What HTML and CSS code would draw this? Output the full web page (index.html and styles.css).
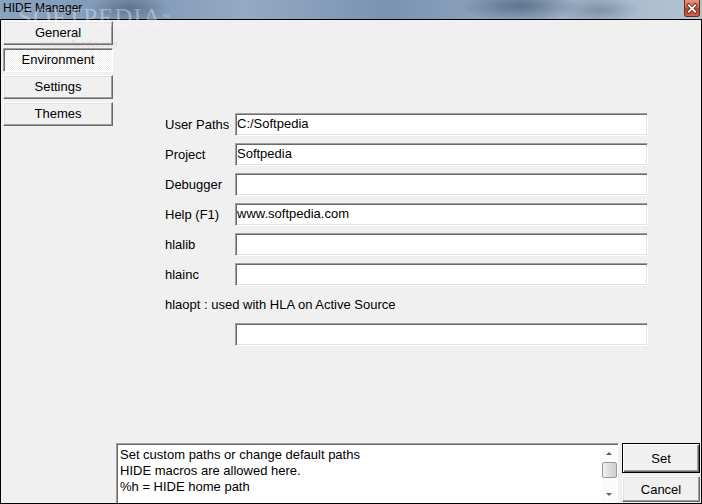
FILE: index.html
```html
<!DOCTYPE html>
<html lang="en">

<head>
    <meta charset="UTF-8">
    <title>HIDE Manager</title>
    <link rel="stylesheet" href="styles.css">
</head>

<body>
    <div class="window">
        <div class="titlebar">
            <span class="title">HIDE Manager</span>
            <button class="close-btn">
                <svg width="15" height="15" viewBox="0 0 15 15">
                    <path d="M4 4 L11 11 M11 4 L4 11" stroke="#5a1a10" stroke-width="3.6" stroke-linecap="square" />
                    <path d="M4 4 L11 11 M11 4 L4 11" stroke="#fff" stroke-width="2" stroke-linecap="square" />
                </svg>
            </button>
        </div>

        <div class="client">
            <div class="sidebar">
                <button class="tab-btn">General</button>
                <button class="tab-btn active">Environment</button>
                <button class="tab-btn">Settings</button>
                <button class="tab-btn">Themes</button>
            </div>

            <div class="form">
                <div class="row">
                    <label>User Paths</label>
                    <div class="field">C:/Softpedia</div>
                </div>
                <div class="row">
                    <label>Project</label>
                    <div class="field">Softpedia</div>
                </div>
                <div class="row">
                    <label>Debugger</label>
                    <div class="field"></div>
                </div>
                <div class="row">
                    <label>Help (F1)</label>
                    <div class="field">www.softpedia.com</div>
                </div>
                <div class="row">
                    <label>hlalib</label>
                    <div class="field"></div>
                </div>
                <div class="row">
                    <label>hlainc</label>
                    <div class="field"></div>
                </div>
                <div class="row">
                    <label class="wide">hlaopt : used with HLA on Active Source</label>
                </div>
                <div class="row">
                    <label></label>
                    <div class="field"></div>
                </div>
            </div>

            <div class="bottom">
                <div class="memo">
                    <div class="memo-text">
                        Set custom paths or change default paths<br>
                        HIDE macros are allowed here.<br>
                        %h = HIDE home path
                    </div>
                    <div class="scrollbar">
                        <div class="arrow up"></div>
                        <div class="thumb"></div>
                        <div class="track"></div>
                        <div class="arrow down"></div>
                    </div>
                </div>
                <div class="actions">
                    <button class="push-btn default">Set</button>
                    <button class="push-btn">Cancel</button>
                </div>
            </div>
        </div>

        <div class="watermark">SOFTPEDIA<sup>™</sup><small>www.softpedia.com</small></div>
    </div>
</body>

</html>
```

FILE: styles.css
```css
* {
    margin: 0;
    padding: 0;
    box-sizing: border-box;
    font-family: 'Liberation Sans', Arial, sans-serif;
}

body {
    width: 702px;
    height: 504px;
    overflow: hidden;
    background: #f0f0f0;
}

.window {
    width: 702px;
    height: 504px;
    display: flex;
    flex-direction: column;
    position: relative;
}

.titlebar {
    height: 19px;
    display: flex;
    align-items: flex-start;
    justify-content: space-between;
    padding: 0 2px 0 3px;
    background:
        radial-gradient(ellipse 40px 14px at 130px 8px, rgba(60, 80, 105, 0.5), transparent),
        radial-gradient(ellipse 60px 16px at 520px 6px, rgba(50, 70, 95, 0.55), transparent),
        radial-gradient(ellipse 40px 14px at 600px 10px, rgba(70, 90, 115, 0.4), transparent),
        linear-gradient(90deg, #8aa3bf 0%, #7f98b5 18%, #93aac3 35%, #7a93b0 55%, #8fa6bf 72%, #a9bbce 88%, #b3c3d3 100%);
}

.title {
    font-size: 12px;
    line-height: 17px;
    color: #000;
}

.close-btn {
    width: 16px;
    height: 17px;
    border: 1px solid #6a2a1c;
    border-top: none;
    border-radius: 0 0 3px 3px;
    background: linear-gradient(180deg, #e8957c 0%, #d2664a 45%, #c0401f 55%, #d4674a 100%);
    display: flex;
    align-items: center;
    justify-content: center;
}

.client {
    flex: 1;
    border: 1px solid #000;
    background: #f0f0f0;
    display: grid;
    grid-template-columns: 114px 1fr;
    grid-template-rows: 1fr auto;
}

.sidebar {
    grid-row: 1;
    grid-column: 1;
    padding: 1px 0 0 2px;
    display: flex;
    flex-direction: column;
    gap: 3px;
}

.tab-btn {
    width: 110px;
    height: 24px;
    font-size: 13px;
    line-height: 20px;
    padding-bottom: 1px;
    color: #000;
    background: #f0f0f0;
    border-top: 1px solid #fff;
    border-left: 1px solid #fff;
    border-right: 1px solid #696969;
    border-bottom: 1px solid #696969;
    box-shadow: inset -1px -1px 0 #a0a0a0, inset 1px 1px 0 #e3e3e3;
}

.tab-btn.active {
    border-top: 1px solid #a0a0a0;
    border-left: 1px solid #a0a0a0;
    border-right: 1px solid #fff;
    border-bottom: 1px solid #fff;
    box-shadow: inset 1px 1px 0 #696969;
    background: repeating-conic-gradient(#ffffff 0 25%, #eeeeee 0 50%) 0 0 / 2px 2px;
}

.form {
    grid-row: 1;
    grid-column: 2;
    padding: 93px 0 0 50px;
    display: flex;
    flex-direction: column;
    gap: 7px;
}

.row {
    display: flex;
    align-items: center;
    height: 23px;
}

.row label {
    width: 70px;
    font-size: 13px;
    color: #000;
}

.row label.wide {
    width: auto;
}

.field {
    width: 413px;
    height: 23px;
    background: #fff;
    font-size: 13px;
    line-height: 19px;
    padding-left: 1px;
    border-top: 1px solid #a0a0a0;
    border-left: 1px solid #a0a0a0;
    border-right: 1px solid #fff;
    border-bottom: 1px solid #fff;
    box-shadow: inset 1px 1px 0 #696969, inset -1px -1px 0 #e3e3e3;
}

.bottom {
    grid-row: 2;
    grid-column: 2;
    display: flex;
    gap: 4px;
    padding: 0 2px 0 1px;
    height: 60px;
}

.memo {
    width: 502px;
    height: 60px;
    background: #fff;
    display: flex;
    border-top: 1px solid #a0a0a0;
    border-left: 1px solid #a0a0a0;
    box-shadow: inset 1px 1px 0 #696969;
}

.memo-text {
    flex: 1;
    font-size: 13px;
    line-height: 16px;
    padding: 3px 0 0 3px;
    color: #000;
}

.scrollbar {
    width: 16px;
    margin: 1px 1px 0 0;
    background: #fbfbfb;
    display: flex;
    flex-direction: column;
    align-items: center;
}

.arrow {
    width: 16px;
    height: 17px;
    display: flex;
    align-items: center;
    justify-content: center;
}

.arrow::before {
    content: '';
    border-left: 3px solid transparent;
    border-right: 3px solid transparent;
}

.arrow.up::before {
    border-bottom: 3px solid #606060;
}

.arrow.down::before {
    border-top: 3px solid #606060;
}

.thumb {
    width: 15px;
    height: 16px;
    border: 1px solid #9a9a9a;
    border-radius: 2px;
    background: linear-gradient(90deg, #f2f2f2, #dcdcdc 50%, #cfcfcf);
}

.track {
    flex: 1;
}

.actions {
    display: flex;
    flex-direction: column;
    gap: 3px;
}

.push-btn {
    width: 78px;
    height: 26px;
    font-size: 13px;
    color: #000;
    background: #f0f0f0;
    border-top: 1px solid #fff;
    border-left: 1px solid #fff;
    border-right: 1px solid #696969;
    border-bottom: 1px solid #696969;
    box-shadow: inset -1px -1px 0 #a0a0a0, inset 1px 1px 0 #e3e3e3;
}

.push-btn.default {
    height: 30px;
    border: 1px solid #000;
    box-shadow: inset 1px 1px 0 #fff, inset -1px -1px 0 #696969, inset -2px -2px 0 #a0a0a0;
}

/* site watermark baked into the screenshot */
.watermark {
    position: absolute;
    left: 18px;
    top: 6px;
    font-family: 'Liberation Serif', serif;
    font-size: 25px;
    letter-spacing: 1px;
    color: rgba(255, 255, 255, 0.35);
    pointer-events: none;
    line-height: 24px;
}

.watermark sup {
    font-family: 'Liberation Sans', sans-serif;
    font-size: 8px;
    vertical-align: top;
}

.watermark small {
    position: absolute;
    left: 22px;
    top: 34px;
    font-size: 9px;
    line-height: 9px;
    letter-spacing: 0;
    color: rgba(160, 160, 160, 0.35);
    white-space: nowrap;
}
```
